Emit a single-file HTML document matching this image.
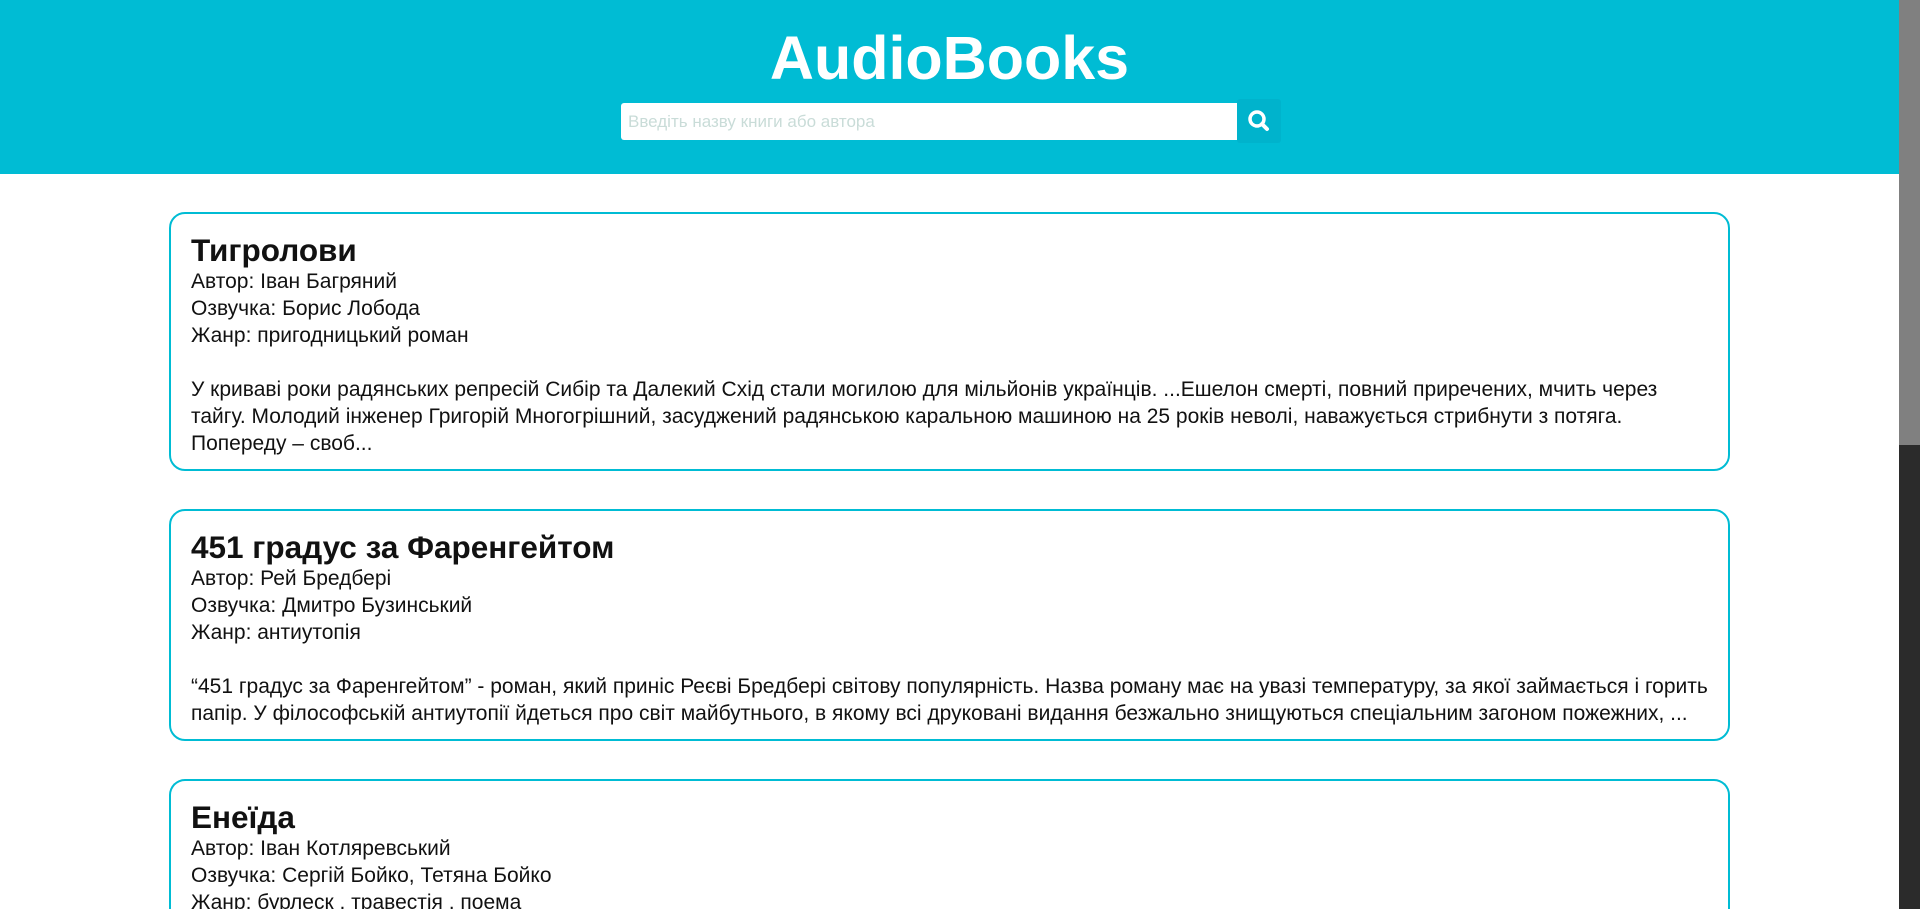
<!DOCTYPE html>
<html><head><meta charset="utf-8"><style>
html,body{margin:0;padding:0;width:1920px;height:909px;overflow:hidden;}
body{position:relative;background:#fff;font-family:"Liberation Sans","DejaVu Sans",sans-serif;color:#111;}
.header{position:absolute;left:0;top:0;width:1899px;height:174px;background:#00bcd4;}
.title{position:absolute;left:0;width:1899px;top:20px;text-align:center;color:#fff;font-weight:bold;font-size:61px;line-height:76px;}
.input{position:absolute;left:621px;top:103px;width:616px;height:37px;background:#fff;border-radius:3px 0 0 3px;}
.input span{position:absolute;left:7px;top:9px;font-size:17px;color:#c9dcd8;}
.btn{position:absolute;left:1237px;top:99px;width:44px;height:44px;background:#00b3cc;border-radius:3px;}
.sb{position:absolute;left:1899px;top:0;width:21px;height:909px;background:#2b2b2b;}
.sb div{width:21px;height:445px;background:#808080;}
.card{position:absolute;left:169px;width:1561px;border:2px solid #00bcd4;border-radius:16px;padding:0 0 0 20px;box-sizing:border-box;overflow:hidden;}
.card h2{margin:0;font-size:31.5px;line-height:36px;font-weight:bold;padding-top:18px;}
.card p{margin:0;font-size:21px;line-height:27px;white-space:nowrap;}
</style></head><body>
<div class="header">
<div class="title">AudioBooks</div>
<div class="input"><span>Введіть назву книги або автора</span></div>
<div class="btn"><svg width="44" height="44" viewBox="0 0 44 44"><circle cx="20" cy="20" r="7" fill="none" stroke="#fff" stroke-width="3.5"/><line x1="25" y1="25" x2="30" y2="30" stroke="#fff" stroke-width="4" stroke-linecap="round"/></svg></div>
</div>
<div class="sb"><div></div></div>

<div class="card" style="top:212px;height:259px;">
<h2>Тигролови</h2>
<p>Автор: Іван Багряний<br>Озвучка: Борис Лобода<br>Жанр: пригодницький роман<br><br>У криваві роки радянських репресій Сибір та Далекий Схід стали могилою для мільйонів українців. ...Ешелон смерті, повний приречених, мчить через<br>тайгу. Молодий інженер Григорій Многогрішний, засуджений радянською каральною машиною на 25 років неволі, наважується стрибнути з потяга.<br>Попереду – своб...</p>
</div>

<div class="card" style="top:509px;height:232px;">
<h2>451 градус за Фаренгейтом</h2>
<p>Автор: Рей Бредбері<br>Озвучка: Дмитро Бузинський<br>Жанр: антиутопія<br><br>“451 градус за Фаренгейтом” - роман, який приніс Реєві Бредбері світову популярність. Назва роману має на увазі температуру, за якої займається і горить<br>папір. У філософській антиутопії йдеться про світ майбутнього, в якому всі друковані видання безжально знищуються спеціальним загоном пожежних, ...</p>
</div>

<div class="card" style="top:779px;height:130px;border-bottom:none;border-radius:16px 16px 0 0;">
<h2>Енеїда</h2>
<p>Автор: Іван Котляревський<br>Озвучка: Сергій Бойко, Тетяна Бойко<br>Жанр: бурлеск , травестія , поема</p>
</div>
</body></html>
